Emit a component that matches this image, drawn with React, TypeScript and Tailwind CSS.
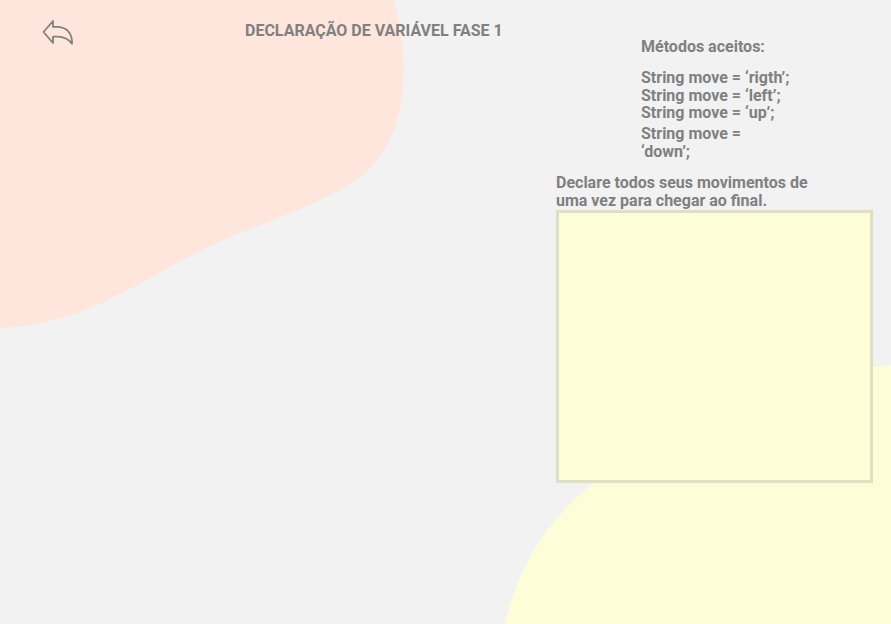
export default function App() {
  return (
    <div className="relative h-[624px] w-full overflow-hidden bg-[#f2f2f2] font-['Roboto',sans-serif] text-[#808080]">
      {/* background blobs */}
      <svg
        className="absolute inset-0 h-full w-full"
        viewBox="0 0 891 624"
        preserveAspectRatio="none"
      >
        <path
          d="M0 0 H393 C402 25 405 60 403 85 C400 130 382 168 340 190 C300 212 255 226 215 244 C150 273 90 325 0 328 Z"
          fill="#ffe6dc"
        />
        <path
          d="M505 624 C518 565 550 515 600 478 C680 420 790 372 891 365 V624 Z"
          fill="#fdfed8"
        />
      </svg>

      <div className="relative flex items-start">
        <button className="ml-[42px] mt-[18px] h-[28px] w-[34px]" aria-label="Voltar">
          <svg viewBox="0 0 34 28" className="h-[28px] w-[34px]" fill="none">
            <path
              d="M1.5 14 L11 3 V8.8 H15 C24 8.8 30.5 14.5 30 25.8 C26.5 20.5 22 18.6 15 18.6 H11 V25 Z"
              stroke="#808080"
              strokeWidth="1.8"
              strokeLinejoin="round"
            />
          </svg>
        </button>

        <h1 className="ml-[169px] mt-[22px] text-[16px] font-bold leading-[18px] whitespace-nowrap">
          DECLARAÇÃO DE VARIÁVEL FASE 1
        </h1>

        <div className="ml-auto mr-[18px] flex w-[317px] flex-col">
          <div className="ml-[85px] mt-[38px] w-[151px] text-[16px] font-bold leading-[17.5px]">
            <p>Métodos aceitos:</p>
            <p className="mt-[13.5px]">
              String move = ‘rigth’;
              <br />
              String move = ‘left’;
              <br />
              String move = ‘up’;
            </p>
            <p className="mt-[3.5px] leading-[18px]">String move = ‘down’;</p>
          </div>

          <p className="mt-[13px] w-[262px] text-[16px] font-bold leading-[18px]">
            Declare todos seus movimentos de uma vez para chegar ao final.
          </p>

          <textarea className="h-[273px] w-[317px] resize-none border-[3px] border-[#dfdfc4] bg-[#fdfed8] outline-none" />
        </div>
      </div>
    </div>
  );
}
